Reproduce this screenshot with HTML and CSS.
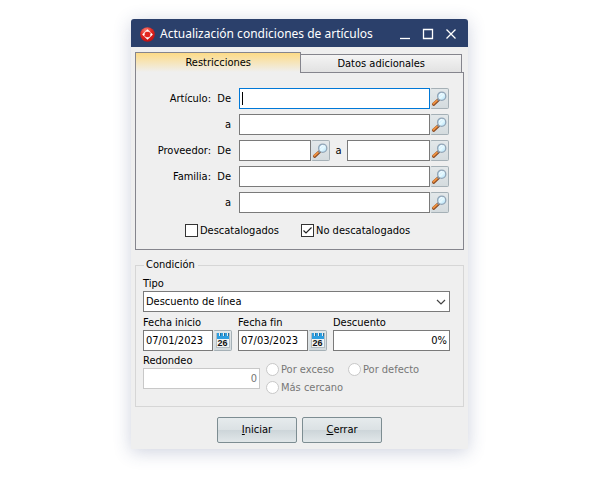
FILE: index.html
```
<!DOCTYPE html>
<html lang="es">
<head>
<meta charset="utf-8">
<title>Actualización condiciones de artículos</title>
<link rel="stylesheet" href="styles.css">
</head>
<body>
<svg class="defs" aria-hidden="true">
  <linearGradient id="lens" x1="0" y1="0" x2="1" y2="1">
    <stop offset="0" stop-color="#9ed8fa"/><stop offset=".5" stop-color="#e8faff"/><stop offset="1" stop-color="#a4daf6"/>
  </linearGradient>
  <radialGradient id="ball" cx=".4" cy=".25" r=".8">
    <stop offset="0" stop-color="#ff8a7c"/><stop offset=".5" stop-color="#e3261f"/><stop offset="1" stop-color="#b80d10"/>
  </radialGradient>
  <symbol id="search" viewBox="0 0 17 17">
    <path d="M2.6 14.2 7.4 9.9" stroke="#8a4a22" stroke-width="3.2" stroke-linecap="round"/>
    <path d="M2.4 13.7 7 9.6" stroke="#ee9140" stroke-width="1.9" stroke-linecap="round"/>
    <path d="M6.6 10.4 8.3 8.9" stroke="#77808c" stroke-width="2.2"/>
    <circle cx="10.7" cy="6.2" r="4.1" fill="url(#lens)" stroke="#93a5b6" stroke-width="1.3"/>
    <path d="M8.3 5.8a2.8 2.8 0 0 1 2.8-2.3" stroke="#fff" fill="none"/>
  </symbol>
</svg>
<main class="window">
  <header class="titlebar">
    <svg class="logo" viewBox="0 0 15 15" aria-hidden="true">
      <circle cx="7.5" cy="7.5" r="7.3" fill="url(#ball)"/>
      <path d="m7.5 2.2 5.3 5.3-5.3 5.3-5.3-5.3z" fill="#fff"/>
      <path d="M7.5 4.7h1.4l1.4 1.4v2.8l-1.4 1.4H6.1L4.7 8.9V6.1l1.4-1.4z" fill="#e3261f"/>
      <path d="m3 10.300 2-2M10 6.700l2-2" stroke="#e3261f"/>
    </svg>
    <h1>Actualización condiciones de artículos</h1>
    <div class="controls">
      <button aria-label="Minimizar"><svg viewBox="0 0 12 12"><path d="M1 10.5h10"/></svg></button>
      <button aria-label="Maximizar"><svg viewBox="0 0 12 12"><path d="M1.5 1.5h9v9h-9z"/></svg></button>
      <button aria-label="Cerrar ventana"><svg viewBox="0 0 12 12"><path d="m1.5 1.5 9 9m0-9-9 9"/></svg></button>
    </div>
  </header>
  <form class="body">
    <div class="tabs" role="tablist">
      <button type="button" class="tab active" role="tab" aria-selected="true">Restricciones</button>
      <button type="button" class="tab" role="tab" aria-selected="false">Datos adicionales</button>
    </div>
    <section class="panel">
      <div class="grid">
        <span>Artículo:</span><label for="art1">De</label>
        <div class="combo"><input id="art1" class="focused"><i class="caret"></i><button type="button" class="pick" aria-label="Buscar"><svg><use href="#search"/></svg></button></div>
        <label class="second" for="art2">a</label>
        <div class="combo"><input id="art2"><button type="button" class="pick" aria-label="Buscar"><svg><use href="#search"/></svg></button></div>
        <span>Proveedor:</span><label for="prov1">De</label>
        <div class="pair">
          <div class="combo"><input id="prov1"><button type="button" class="pick" aria-label="Buscar"><svg><use href="#search"/></svg></button></div>
          <label for="prov2">a</label>
          <div class="combo"><input id="prov2"><button type="button" class="pick" aria-label="Buscar"><svg><use href="#search"/></svg></button></div>
        </div>
        <span>Familia:</span><label for="fam1">De</label>
        <div class="combo"><input id="fam1"><button type="button" class="pick" aria-label="Buscar"><svg><use href="#search"/></svg></button></div>
        <label class="second" for="fam2">a</label>
        <div class="combo"><input id="fam2"><button type="button" class="pick" aria-label="Buscar"><svg><use href="#search"/></svg></button></div>
      </div>
      <div class="checks">
        <label class="option"><input type="checkbox">Descatalogados</label>
        <label class="option"><input type="checkbox" checked>No descatalogados</label>
      </div>
    </section>
    <fieldset class="condition">
      <legend>Condición</legend>
      <div class="field">
        <label for="tipo">Tipo</label>
        <select id="tipo"><option>Descuento de línea</option></select>
      </div>
      <div class="dates">
        <div class="field">
          <label for="inicio">Fecha inicio</label>
          <div class="combo"><input id="inicio" value="07/01/2023"><button type="button" class="pick" aria-label="Calendario"><span class="cal">26</span></button></div>
        </div>
        <div class="field">
          <label for="fin">Fecha fin</label>
          <div class="combo"><input id="fin" value="07/03/2023"><button type="button" class="pick" aria-label="Calendario"><span class="cal">26</span></button></div>
        </div>
        <div class="field">
          <label for="descuento">Descuento</label>
          <input id="descuento" class="number" value="0%">
        </div>
      </div>
      <div class="rounding">
        <div class="field">
          <label for="redondeo">Redondeo</label>
          <input id="redondeo" class="number" value="0" disabled>
        </div>
        <div class="radios">
          <label class="option"><input type="radio" name="modo" disabled>Por exceso</label>
          <label class="option"><input type="radio" name="modo" disabled>Por defecto</label>
          <label class="option"><input type="radio" name="modo" disabled>Más cercano</label>
        </div>
      </div>
    </fieldset>
    <div class="actions">
      <button type="button"><u>I</u>niciar</button>
      <button type="button"><u>C</u>errar</button>
    </div>
  </form>
</main>
</body>
</html>
```
FILE: styles.css
```
* { box-sizing: border-box; }
body {
  margin: 0;
  padding: 19px 132px 32px 131px;
  background: #fff;
  color: #000;
  font: 11px/14px "DejaVu Sans Condensed", "DejaVu Sans", sans-serif;
}
.defs { position: absolute; width: 0; height: 0; }
button, input, select { margin: 0; font: inherit; color: inherit; border-radius: 0; }
.window {
  background: #efefef;
  border-radius: 3px 3px 0 0;
  box-shadow: 0 3px 18px rgba(50, 65, 120, .24);
}
.titlebar {
  display: flex;
  align-items: center;
  height: 28px;
  padding: 2px 11px 0 9px;
  gap: 5px;
  background: #2b406b;
  border-radius: 3px 3px 0 0;
  color: #fff;
}
.logo { width: 15px; height: 15px; }
h1 { flex: 1; margin: 0; font: 12px/18px "Noto Sans", sans-serif; white-space: nowrap; }
.controls { display: flex; gap: 11px; }
.controls button { padding: 0; border: 0; background: none; width: 12px; height: 12px; }
.controls svg { display: block; width: 12px; height: 12px; fill: none; stroke: #fff; stroke-width: 1.3; }
.body { padding: 5px 4px 6px; }
.tabs { display: flex; align-items: flex-end; padding-right: 2px; }
.tab {
  flex: 161;
  height: 18px;
  padding: 0;
  border: 1px solid #85858d;
  border-left: 0;
  border-bottom: 0;
  background: linear-gradient(#f4f4f4, #e2e2e2);
}
.tab.active {
  flex: 166;
  height: 20px;
  border-left: 1px solid #85858d;
  background: linear-gradient(#fddb86, #efefef);
}
.panel {
  padding: 16px 14px 11px 0;
  border: 1px solid #85858d;
  border-top: 0;
  background: linear-gradient(#85858d, #85858d) right top / 50% 1px no-repeat;
}
.grid {
  display: grid;
  grid-template-columns: 75px 20px 1fr;
  row-gap: 5px;
  align-items: center;
  text-align: right;
}
.grid > .combo, .pair { margin-left: 8px; }
.second { grid-column: 2; }
.pair { display: flex; align-items: center; gap: 5px; }
.pair .combo { flex: 102; }
.pair .combo:first-child { flex: 91; }
.combo { position: relative; display: flex; min-width: 0; }
.combo input { flex: 1; min-width: 0; }
.caret { position: absolute; left: 3px; top: 4px; width: 1px; height: 13px; background: #000; }
input, select {
  width: 100%;
  height: 21px;
  padding: 0 2px;
  border: 1px solid #7a7a7a;
  background: #fff;
  outline: 0;
}
input.focused { border-color: #0078d7; }
.pick {
  display: flex;
  align-items: center;
  justify-content: center;
  width: 19px;
  height: 21px;
  padding: 0;
  border: 1px solid #a5b0b6;
  border-left-color: #dce3e6;
  border-radius: 2px;
  background: linear-gradient(#e3e8ea, #d4dbde);
}
.pick svg { flex: none; width: 17px; height: 17px; }
.cal {
  flex: none;
  width: 14px;
  height: 15px;
  padding-top: 6px;
  border: 1px solid #b4bdc2;
  border-top: 0;
  background:
    repeating-linear-gradient(90deg, transparent 0 2px, #e6eef2 2px 3px, #266f9d 3px 4px) 0 0 / 100% 3px no-repeat,
    linear-gradient(#2d9ee0 6px, #f1f4f5 6px);
  color: #111;
  font: bold 9px/8px "Liberation Sans", sans-serif;
  text-align: center;
}
.checks { display: grid; grid-template-columns: 116px 1fr; padding: 10px 0 0 49px; }
.option { display: flex; align-items: center; gap: 2px; height: 15px; white-space: nowrap; }
.option input {
  appearance: none;
  flex: none;
  width: 13px;
  height: 13px;
  padding: 0;
  border-color: #333;
}
.option input:checked {
  background: #fff url("data:image/svg+xml,%3Csvg xmlns='http://www.w3.org/2000/svg' viewBox='0 0 11 11'%3E%3Cpath d='m1.5 5.5 2.5 2.5 5.5-5.5' fill='none' stroke='%23222' stroke-width='1.2'/%3E%3C/svg%3E") center / 11px 11px;
}
.condition {
  min-width: 0;
  margin: 8px 0 0;
  padding: 5px 13px 11px 7px;
  border: 1px solid #d6d6d6;
}
legend { margin-left: 1px; padding: 0 3px 0 2px; }
.field { min-width: 0; }
.field label { display: block; }
select {
  display: block;
  appearance: none;
  background: #fff url("data:image/svg+xml,%3Csvg xmlns='http://www.w3.org/2000/svg' viewBox='0 0 10 6'%3E%3Cpath d='m1 1 4 4 4-4' fill='none' stroke='%23444' stroke-width='1.2'/%3E%3C/svg%3E") right 3px center / 10px 6px no-repeat;
}
.dates { display: grid; grid-template-columns: 89fr 89fr 117fr; gap: 6px; padding-top: 4px; }
.number { text-align: right; }
.rounding { display: grid; grid-template-columns: 117fr 184fr; gap: 6px; padding-top: 3px; }
input:disabled { color: #777; }
.field input:disabled, .radios input:disabled { border-color: #c8c8c8; }
.radios {
  display: grid;
  grid-template-columns: 82px 1fr;
  align-content: start;
  row-gap: 3px;
  padding-top: 8px;
  color: #777;
}
.radios input { border-radius: 50%; }
.actions { display: flex; justify-content: center; gap: 5px; padding-top: 10px; }
.actions button {
  width: 80px;
  height: 26px;
  padding: 0;
  border: 1px solid #7d8d92;
  border-radius: 2px;
  background: linear-gradient(#e6ebed, #dbe1e4 50%, #cdd5d9 51%, #e1e7e9);
}
```
